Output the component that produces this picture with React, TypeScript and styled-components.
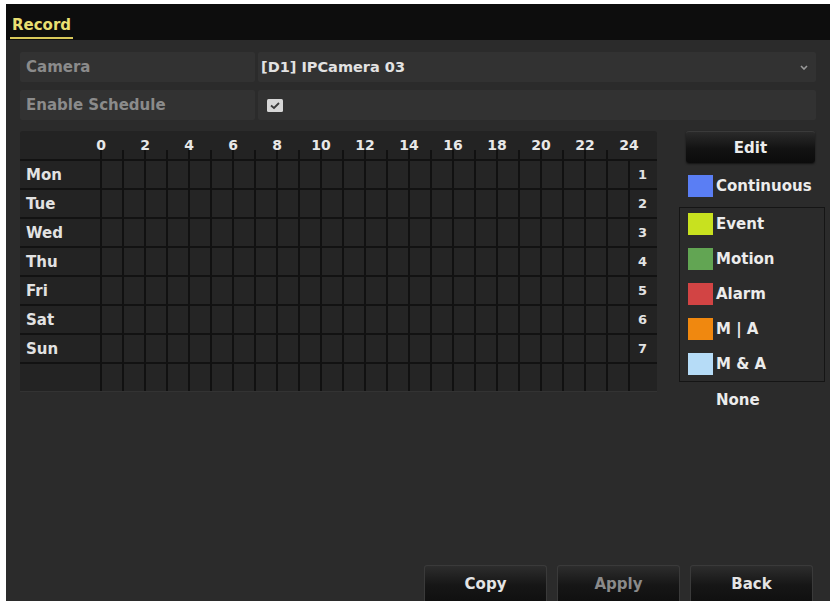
import React from 'react';
import styled, { createGlobalStyle } from 'styled-components';

const GlobalStyle = createGlobalStyle`
  html, body {
    margin: 0;
    padding: 0;
    background: #ffffff;
  }
  body {
    font-family: "DejaVu Sans", "Liberation Sans", sans-serif;
    font-weight: 700;
  }
`;

const DAYS = ['Mon', 'Tue', 'Wed', 'Thu', 'Fri', 'Sat', 'Sun', ''];
const HOURS = Array.from({ length: 24 }, (_, h) => h);

const LEGEND = [
  { label: 'Event', color: '#c8e11f' },
  { label: 'Motion', color: '#62a553' },
  { label: 'Alarm', color: '#d24444' },
  { label: 'M | A', color: '#f0880f' },
  { label: 'M & A', color: '#b6dcf7' },
];

const App = () => {
  return (
    <>
      <GlobalStyle />
      <Screen>
        <TitleBar>
          <Tab>Record</Tab>
        </TitleBar>

        <Content>
          <FieldRow>
            <FieldCell $muted>Camera</FieldCell>
            <ValueCell>
              <span>[D1] IPCamera 03</span>
              <Chevron viewBox="0 0 8 5" width="8" height="5">
                <path d="M1 1 L4 4 L7 1" fill="none" stroke="#9a9a9a" strokeWidth="1.6" />
              </Chevron>
            </ValueCell>
          </FieldRow>
          <FieldRow>
            <FieldCell $muted>Enable Schedule</FieldCell>
            <ValueCell>
              <CheckBox viewBox="0 0 16 13" width="16" height="13">
                <rect x="0" y="0" width="16" height="13" rx="1.5" fill="#d6d6d6" />
                <path d="M4 6.5 L7 9 L12 4" fill="none" stroke="#3a3a3a" strokeWidth="1.8" />
              </CheckBox>
            </ValueCell>
          </FieldRow>

          <Schedule>
            <GridPanel>
              <HeadCorner />
              {HOURS.map((h) => (
                <HeadCell key={h}>
                  {h % 2 === 0 && <HourLabel>{h}</HourLabel>}
                </HeadCell>
              ))}
              <HeadCell $last>
                <HourLabel>24</HourLabel>
              </HeadCell>

              {DAYS.map((day, i) => (
                <React.Fragment key={i}>
                  <DayCell>{day}</DayCell>
                  {HOURS.map((h) => (
                    <HourCell key={h} />
                  ))}
                  <NumCell>{day ? i + 1 : ''}</NumCell>
                </React.Fragment>
              ))}
            </GridPanel>

            <SidePanel>
              <EditButton>Edit</EditButton>
              <LegendItem $top>
                <Swatch $color="#5a7ef4" />
                Continuous
              </LegendItem>
              <LegendBox>
                {LEGEND.map((item) => (
                  <LegendItem key={item.label}>
                    <Swatch $color={item.color} />
                    {item.label}
                  </LegendItem>
                ))}
              </LegendBox>
              <LegendItem>
                <Swatch $color="transparent" />
                None
              </LegendItem>
            </SidePanel>
          </Schedule>

          <Footer>
            <FooterButton>Copy</FooterButton>
            <FooterButton $disabled>Apply</FooterButton>
            <FooterButton>Back</FooterButton>
          </Footer>
        </Content>
      </Screen>
    </>
  );
};

const Screen = styled.div`
  margin: 4px 4px 0 6px;
  height: 597px;
  background: #2b2b2b;
  display: flex;
  flex-direction: column;
  overflow: hidden;
`;

const TitleBar = styled.div`
  height: 36px;
  flex-shrink: 0;
  background: #0d0d0d;
  display: flex;
  align-items: flex-end;
  padding-left: 4px;
`;

const Tab = styled.div`
  font-size: 15px;
  line-height: 22px;
  color: #e9df72;
  padding: 0 2px 1px;
  margin-bottom: 1px;
  border-bottom: 2px solid #d8c85a;
`;

const Content = styled.div`
  flex: 1;
  display: flex;
  flex-direction: column;
  padding: 12px 14px 0;
`;

const FieldRow = styled.div`
  display: grid;
  grid-template-columns: 235px 1fr;
  column-gap: 3px;
  height: 30px;
  margin-bottom: 8px;
`;

const FieldCell = styled.div<{ $muted?: boolean }>`
  display: flex;
  align-items: center;
  padding-left: 6px;
  background: #323232;
  border-radius: 2px;
  font-size: 15px;
  color: ${(p) => (p.$muted ? '#8b8b8b' : '#e2e2e2')};
`;

const ValueCell = styled(FieldCell)`
  padding-left: 3px;
  padding-right: 8px;
  font-size: 14.5px;
  justify-content: space-between;
`;

const Chevron = styled.svg`
  display: block;
`;

const CheckBox = styled.svg`
  display: block;
  margin-left: 6px;
`;

const Schedule = styled.div`
  display: flex;
  align-items: flex-start;
  gap: 22px;
  margin-top: 3px;
  margin-right: -9px;
`;

const GridPanel = styled.div`
  width: 637px;
  flex-shrink: 0;
  display: grid;
  grid-template-columns: 80px repeat(24, 22px) 29px;
  grid-template-rows: 28px repeat(8, 29px);
  background: #232323;
  border-radius: 3px 3px 0 0;
  border-bottom: 1px solid #333333;
  overflow: hidden;
`;

const HeadCorner = styled.div``;

const HeadCell = styled.div<{ $last?: boolean }>`
  display: flex;
  align-items: center;
  font-size: 14px;
  color: #e8e8e8;
  background: ${(p) =>
    p.$last ? 'none' : 'linear-gradient(#111111, #111111) left bottom / 2px 9px no-repeat'};
`;

const HourLabel = styled.span`
  transform: translateX(-50%);
  margin-left: 1px;
  white-space: nowrap;
`;

const DayCell = styled.div`
  display: flex;
  align-items: center;
  padding-left: 6px;
  font-size: 15px;
  color: #e2e2e2;
  border-top: 2px solid #121212;
`;

const HourCell = styled.div`
  background: #252525;
  border-top: 2px solid #121212;
  border-left: 2px solid #111111;
`;

const NumCell = styled.div`
  display: flex;
  align-items: center;
  justify-content: flex-end;
  padding-right: 10px;
  font-size: 13px;
  color: #e2e2e2;
  border-top: 2px solid #121212;
  border-left: 2px solid #111111;
`;

const SidePanel = styled.div`
  width: 146px;
  flex-shrink: 0;
  display: flex;
  flex-direction: column;
`;

const EditButton = styled.button`
  margin-left: 7px;
  width: 129px;
  height: 32px;
  border: none;
  border-top: 1px solid #3a3a3a;
  border-radius: 3px;
  background: linear-gradient(#2a2a2a, #121212 55%, #0b0b0b);
  font-family: inherit;
  font-weight: 700;
  font-size: 15px;
  color: #ececec;
  box-shadow: 0 1px 2px rgba(0, 0, 0, 0.6);
`;

const LegendBox = styled.div`
  border: 1px solid #151515;
  padding: 5px 0 6px 8px;
  margin-bottom: 7px;
  display: flex;
  flex-direction: column;
`;

const LegendItem = styled.div<{ $top?: boolean }>`
  display: flex;
  align-items: center;
  gap: 3px;
  height: 22px;
  margin-left: 9px;
  margin-top: ${(p) => (p.$top ? '12px' : '0')};
  margin-bottom: ${(p) => (p.$top ? '10px' : '0')};
  font-size: 15px;
  color: #ececec;

  ${LegendBox} & {
    margin-left: 0;
    margin-bottom: 13px;
  }
  ${LegendBox} &:last-child {
    margin-bottom: 0;
  }
`;

const Swatch = styled.span<{ $color: string }>`
  width: 25px;
  height: 22px;
  flex-shrink: 0;
  background: ${(p) => p.$color};
`;

const Footer = styled.div`
  margin-top: auto;
  display: flex;
  justify-content: flex-end;
  gap: 10px;
  padding-right: 3px;
`;

const FooterButton = styled.button<{ $disabled?: boolean }>`
  width: 123px;
  height: 36px;
  border: 1px solid #3a3a3a;
  border-bottom: none;
  border-radius: 3px 3px 0 0;
  background: linear-gradient(#2d2d2d, #161616 55%, #101010);
  font-family: inherit;
  font-weight: 700;
  font-size: 15px;
  color: ${(p) => (p.$disabled ? '#8a8a8a' : '#e4e4e4')};
`;

export default App;
